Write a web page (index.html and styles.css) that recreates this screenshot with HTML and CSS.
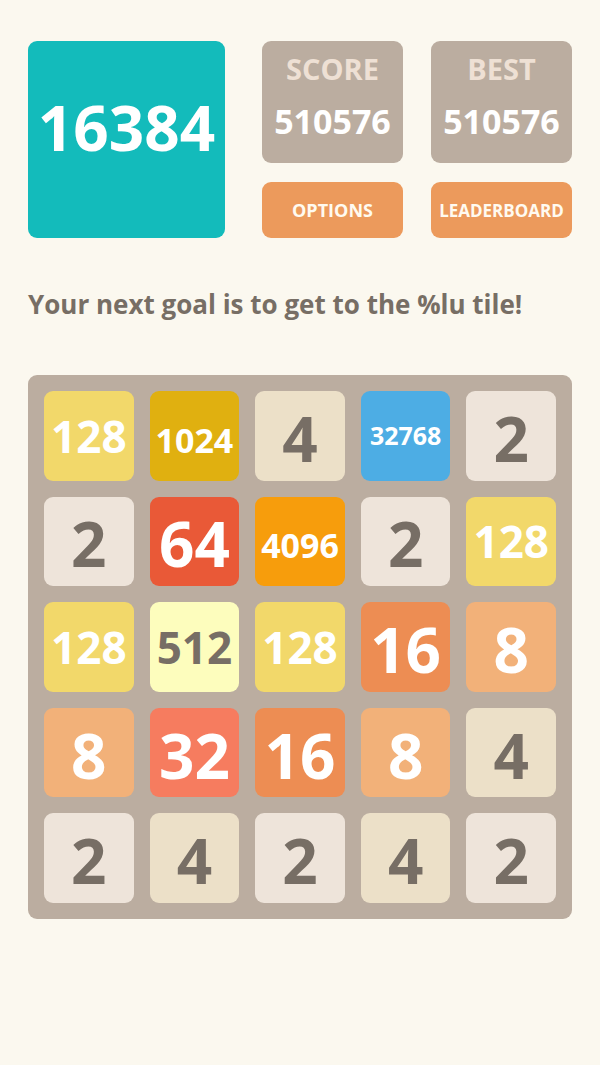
FILE: index.html
```html
<!DOCTYPE html>
<html lang="en">
<head>
  <meta charset="UTF-8">
  <meta name="viewport" content="width=device-width, initial-scale=1.0">
  <title>16384</title>
  <link rel="stylesheet" href="styles.css">
</head>
<body>
  <header class="top">
    <h1 class="logo">16384</h1>

    <div class="panel">
      <div class="score">
        <span class="score-label">SCORE</span>
        <span class="score-value">510576</span>
      </div>
      <div class="score">
        <span class="score-label">BEST</span>
        <span class="score-value">510576</span>
      </div>
      <button type="button" class="btn">OPTIONS</button>
      <button type="button" class="btn btn-small">LEADERBOARD</button>
    </div>
  </header>

  <p class="goal">Your next goal is to get to the %lu tile!</p>

  <main class="board">
    <div class="tile tile-128">128</div>
    <div class="tile tile-1024">1024</div>
    <div class="tile tile-4">4</div>
    <div class="tile tile-32768">32768</div>
    <div class="tile tile-2">2</div>

    <div class="tile tile-2">2</div>
    <div class="tile tile-64">64</div>
    <div class="tile tile-4096">4096</div>
    <div class="tile tile-2">2</div>
    <div class="tile tile-128">128</div>

    <div class="tile tile-128">128</div>
    <div class="tile tile-512">512</div>
    <div class="tile tile-128">128</div>
    <div class="tile tile-16">16</div>
    <div class="tile tile-8">8</div>

    <div class="tile tile-8">8</div>
    <div class="tile tile-32">32</div>
    <div class="tile tile-16">16</div>
    <div class="tile tile-8">8</div>
    <div class="tile tile-4">4</div>

    <div class="tile tile-2">2</div>
    <div class="tile tile-4">4</div>
    <div class="tile tile-2">2</div>
    <div class="tile tile-4">4</div>
    <div class="tile tile-2">2</div>
  </main>
</body>
</html>
```

FILE: styles.css
```css
* {
  box-sizing: border-box;
}

body {
  margin: 0;
  padding: 41px 28px;
  background-color: #fbf8ef;
  color: #776e65;
  font-family: "Open Sans", "Noto Sans", sans-serif;
  font-weight: bold;
}

.top {
  display: grid;
  grid-template-columns: 197fr 310fr;
  gap: 37px;
}

.logo {
  display: flex;
  align-items: center;
  justify-content: center;
  margin: 0;
  padding-bottom: 26px;
  aspect-ratio: 1;
  border-radius: 9px;
  background-color: #13bbbb;
  color: #fff;
  font-size: 62px;
  line-height: 1;
}

.panel {
  display: grid;
  grid-template-columns: 1fr 1fr;
  grid-template-rows: 1fr 56px;
  column-gap: 28px;
  row-gap: 19px;
}

.score {
  display: flex;
  flex-direction: column;
  align-items: center;
  padding-top: 6px;
  border-radius: 9px;
  background-color: #bbada0;
}

.score-label {
  color: #eee0d4;
  font-size: 29px;
  line-height: 44px;
}

.score-value {
  color: #fff;
  font-size: 34px;
  line-height: 60px;
}

.btn {
  padding: 0;
  border: none;
  border-radius: 9px;
  background-color: #ec9a5c;
  color: #fffaf0;
  font: inherit;
  font-size: 18px;
  cursor: pointer;
}

.btn-small {
  font-size: 17px;
}

.goal {
  margin: 46px 0 51px;
  font-size: 26px;
  line-height: 40px;
}

.board {
  display: grid;
  grid-template-columns: repeat(5, 1fr);
  gap: 16px;
  padding: 16px;
  border-radius: 9px;
  background-color: #bbada0;
}

.tile {
  display: flex;
  align-items: center;
  justify-content: center;
  aspect-ratio: 1;
  padding-top: 4px;
  border-radius: 9px;
  color: #fff;
  font-size: 62px;
  line-height: 1;
}

.tile-2 {
  background-color: #eee4da;
  color: #776e65;
}

.tile-4 {
  background-color: #ece0c8;
  color: #776e65;
}

.tile-8 {
  background-color: #f2b179;
}

.tile-16 {
  background-color: #ed8d53;
}

.tile-32 {
  background-color: #f67c5f;
}

.tile-64 {
  background-color: #e95937;
}

.tile-128 {
  padding-top: 0;
  background-color: #f2d86a;
  font-size: 44px;
}

.tile-512 {
  padding-top: 0;
  background-color: #fdfdbd;
  color: #776e65;
  font-size: 44px;
}

.tile-1024 {
  padding-top: 8px;
  background-color: #e0b010;
  font-size: 34px;
}

.tile-4096 {
  padding-top: 8px;
  background-color: #f79d0c;
  font-size: 34px;
}

.tile-32768 {
  padding-top: 0;
  background-color: #4dade4;
  font-size: 25px;
}
```
